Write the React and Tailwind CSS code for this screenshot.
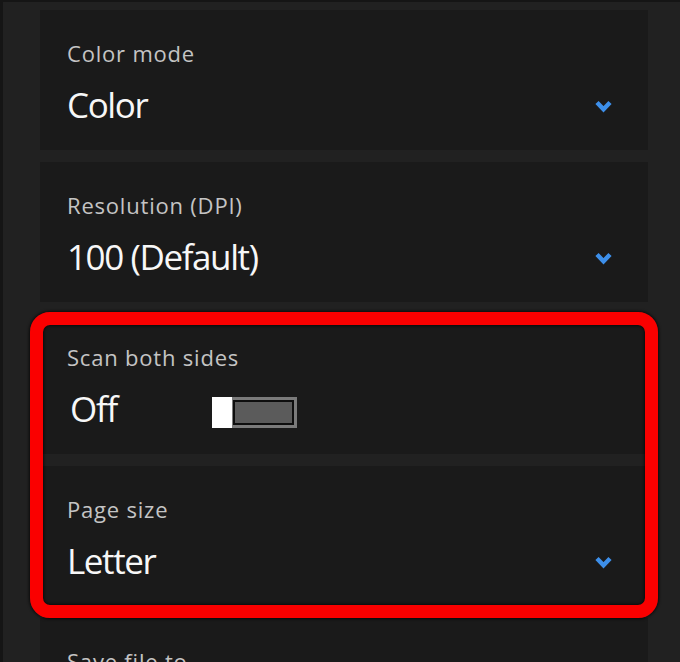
import React from "react";

const font = { fontFamily: '"Open Sans", "Noto Sans", sans-serif' };

function Chevron() {
  return (
    <svg width="17" height="13" viewBox="0 0 17 13" className="mr-[36px] mt-[2px]">
      <polyline
        points="2,2.4 8.5,9.2 15,2.4"
        fill="none"
        stroke="#3d8fea"
        strokeWidth="4.4"
        strokeLinejoin="miter"
        strokeLinecap="butt"
      />
    </svg>
  );
}

function Card({ label, children }) {
  return (
    <div className="h-[140px] w-[608px] bg-[#1a1a1a] pl-[27px] pt-[28px] shrink-0">
      <div className="text-[22px] leading-[30px] tracking-[0.8px] text-[#c4c4c4]">{label}</div>
      <div className="mt-[14px] flex h-[46px] items-center justify-between">{children}</div>
    </div>
  );
}

function Value({ children }) {
  return (
    <span className="text-[35px] leading-[46px] tracking-[-1.4px] text-[#f7f7f7]">{children}</span>
  );
}

export default function App() {
  return (
    <div
      className="h-[662px] w-[680px] overflow-hidden border-l-[3px] border-t-[2px] border-[#151515] bg-[#212121]"
      style={font}
    >
      <div className="flex flex-col gap-[12px] pl-[37px] pt-[8px]">
        <Card label="Color mode">
          <Value>Color</Value>
          <Chevron />
        </Card>
        <Card label="Resolution (DPI)">
          <Value>100 (Default)</Value>
          <Chevron />
        </Card>
        <div className="relative flex w-[608px] flex-col gap-[12px]">
          <Card label="Scan both sides">
            <div className="flex items-center">
              <span className="w-[145px] pl-[3px] text-[35px] leading-[46px] tracking-[-1.2px] text-[#f7f7f7]">
                Off
              </span>
              <div className="mt-[6px] flex h-[31px] items-stretch">
                <div className="relative z-10 w-[20px] bg-white" />
                <div className="-ml-[2px] w-[67px] border-[3px] border-[#7b7b7b] bg-[#0e0e0e] p-[2px]">
                  <div className="h-full w-full bg-[#5b5b5b]" />
                </div>
              </div>
            </div>
          </Card>
          <Card label="Page size">
            <Value>Letter</Value>
            <Chevron />
          </Card>
          <div className="pointer-events-none absolute -left-[10px] -right-[10px] -top-[2px] -bottom-[12px] rounded-[20px] border-[13px] border-[#fa0000] shadow-[0_0_3px_1px_rgba(0,0,0,0.7),inset_0_0_3px_1px_rgba(0,0,0,0.6)]" />
        </div>
        <Card label="Save file to">
          <Value>Scans</Value>
        </Card>
      </div>
    </div>
  );
}
